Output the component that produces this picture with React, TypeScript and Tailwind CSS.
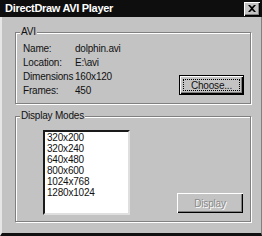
import React from 'react';

const face = 'bg-[#c3c3c3]';

function GroupBox({ label, className, children }: { label: string; className: string; children: React.ReactNode }) {
  return (
    <div className={`relative border border-[#808080] shadow-[inset_1px_1px_0_#fff,1px_1px_0_#fff] ${className}`}>
      <span className={`absolute left-[4px] top-[-7px] px-[1px] leading-[12px] ${face}`}>{label}</span>
      {children}
    </div>
  );
}

export default function App() {
  const info = [
    ['Name:', 'dolphin.avi'],
    ['Location:', 'E:\\avi'],
    ['Dimensions', '160x120'],
    ['Frames:', '450'],
  ];
  const modes = ['320x200', '320x240', '640x480', '800x600', '1024x768', '1280x1024'];

  return (
    <div className={`w-[262px] h-[236px] flex flex-col overflow-hidden ${face} font-['Liberation_Sans',Arial,sans-serif] text-[10px] tracking-[-0.2px] text-[#111]`}>
      {/* title bar */}
      <div className="h-[17px] shrink-0 bg-[#0e0e0e] flex items-center justify-between pl-[5px] pr-[2px]">
        <span className="text-white font-bold text-[11px] tracking-[-0.3px] leading-none">DirectDraw AVI Player</span>
        <div className={`w-[16px] h-[14px] flex items-center justify-center ${face} shadow-[inset_1px_1px_0_#fff,inset_-1px_-1px_0_#000,inset_-2px_-2px_0_#808080]`}>
          <svg width="8" height="7" viewBox="0 0 8 7">
            <path d="M0 0h2l2 2 2-2h2L5 3.5 8 7H6L4 5 2 7H0l3-3.5z" fill="#000" />
          </svg>
        </div>
      </div>

      {/* body */}
      <div className="flex-1 flex flex-col border-l-2 border-l-[#e6e6e6] border-r border-r-[#808080] border-b-[3px] border-b-[#111] pl-[13px] pt-[15px]">
        <GroupBox label="AVI" className="w-[236px] h-[72px] flex justify-between">
          <div className="flex flex-col pt-[8px] pl-[7px]">
            {info.map(([k, v]) => (
              <div key={k} className="flex h-[14px] items-center">
                <span className="w-[52px]">{k}</span>
                <span>{v}</span>
              </div>
            ))}
          </div>
          <button className={`mt-[42px] mr-[6px] w-[65px] h-[20px] p-[3px] flex border border-black ${face} shadow-[inset_1px_1px_0_#fff,inset_-1px_-1px_0_#000,inset_-2px_-2px_0_#808080]`}>
            <span className="flex-1 flex items-center justify-center border border-dotted border-black">Choose...</span>
          </button>
        </GroupBox>

        <GroupBox label="Display Modes" className="mt-[12px] w-[236px] h-[106px] flex">
          <div className="ml-[27px] mt-[13px] w-[87px] h-[85px] bg-white border-2 border-t-[#1a1a1a] border-l-[#1a1a1a] border-r-[#dfdfdf] border-b-[#dfdfdf] pl-[2px] flex flex-col">
            {modes.map(m => (
              <span key={m} className="leading-[11px]">{m}</span>
            ))}
          </div>
          <button disabled className={`ml-[47px] mt-[76px] w-[66px] h-[20px] ${face} text-[#8a8a8a] [text-shadow:1px_1px_0_#fff] shadow-[inset_1px_1px_0_#fff,inset_-1px_-1px_0_#000,inset_-2px_-2px_0_#808080]`}>
            Display
          </button>
        </GroupBox>
      </div>
    </div>
  );
}
